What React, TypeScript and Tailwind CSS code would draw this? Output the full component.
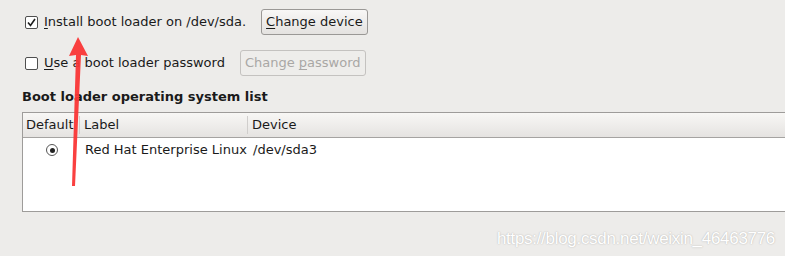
import React from 'react'

const font = { fontFamily: '"DejaVu Sans", sans-serif' }

function Check({ checked }: { checked?: boolean }) {
  return (
    <span className="w-[13px] h-[13px] border border-[#4f4f4f] bg-white rounded-[2px] flex items-center justify-center shrink-0">
      {checked && (
        <svg width="9" height="9" viewBox="0 0 9 9">
          <path d="M1 4.5 L3.5 7.5 L8 1" fill="none" stroke="#1c1c1c" strokeWidth="1.6" />
        </svg>
      )}
    </span>
  )
}

function Arrow() {
  return (
    <svg className="absolute left-0 top-0 pointer-events-none" width="785" height="256">
      <polygon points="78,37 69,56 76,55 72,186 75,186 81,55 88,56" fill="#fa3636" opacity="0.95" />
    </svg>
  )
}

export default function App() {
  return (
    <div className="relative w-[785px] h-[256px] bg-[#edecea] text-[#1a1a1a] text-[13px] overflow-hidden" style={font}>
      <div className="pl-[25px] pt-[9px] flex flex-col">
        <div className="flex items-center h-[26px]">
          <Check checked />
          <span className="ml-[6px]"><span className="underline underline-offset-2">I</span>nstall boot loader on /dev/sda.</span>
          <button className="ml-[15px] h-[26px] px-[4px] border border-[#9a9896] rounded-[3px] bg-gradient-to-b from-[#f8f7f6] to-[#e4e2e0] text-[#1a1a1a]">
            <span className="underline underline-offset-2">C</span>hange device
          </button>
        </div>
        <div className="flex items-center h-[26px] mt-[15px]">
          <Check />
          <span className="ml-[6px]"><span className="underline underline-offset-2">U</span>se a boot loader password</span>
          <button className="ml-[15px] h-[26px] px-[4px] border border-[#c4c2c0] rounded-[3px] bg-[#eeedeb] text-[#a9a7a5]">
            Change <span className="underline underline-offset-2">p</span>assword
          </button>
        </div>
      </div>
      <div className="pl-[22px] mt-[13px]">
        <div className="font-bold leading-[16px]">Boot loader operating system list</div>
        <div className="mt-[7px] h-[100px] border-l border-t border-b border-[#9e9c9a] bg-white">
          <div className="flex h-[25px] border-b border-[#a5a3a1] bg-gradient-to-b from-[#f8f7f5] to-[#e5e3e1]">
            <div className="w-[57px] pl-[3px] flex items-center border-r border-[#d0cecc] my-[3px]">Default</div>
            <div className="w-[168px] pl-[4px] flex items-center border-r border-[#d0cecc] my-[3px]">Label</div>
            <div className="flex-1 pl-[4px] flex items-center">Device</div>
          </div>
          <div className="flex h-[24px] items-center">
            <div className="w-[58px] flex justify-center">
              <span className="w-[12px] h-[12px] rounded-full border border-[#555] bg-white flex items-center justify-center">
                <span className="w-[5px] h-[5px] rounded-full bg-[#222]" />
              </span>
            </div>
            <div className="w-[168px] pl-[4px]">Red Hat Enterprise Linux</div>
            <div className="pl-[4px]">/dev/sda3</div>
          </div>
        </div>
      </div>
      <div className="flex justify-end pr-[10px] mt-[14px]">
        <span className="text-[17px] text-white tracking-[-0.3px]" style={{ fontFamily: '"Liberation Sans", sans-serif', textShadow: '0 0 1.5px #a8a6a4' }}>
          https://blog.csdn.net/weixin_46463776
        </span>
      </div>
      <Arrow />
    </div>
  )
}
